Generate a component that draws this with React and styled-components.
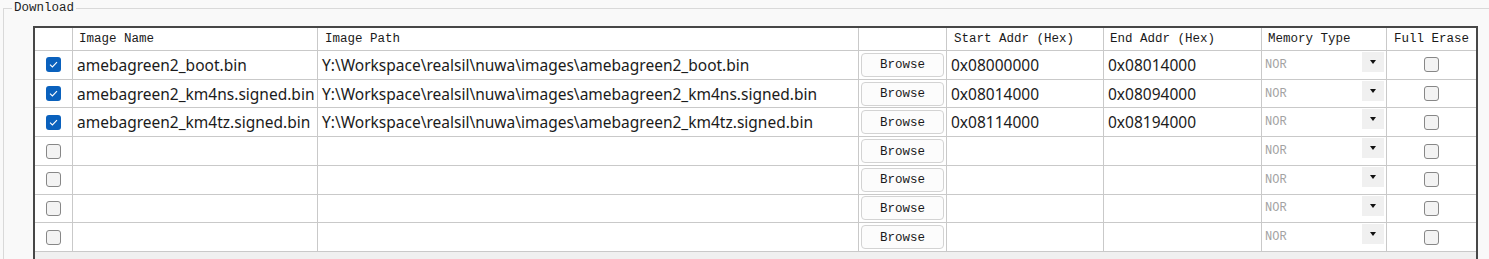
import React from "react";
import styled, { createGlobalStyle } from "styled-components";

const GlobalStyle = createGlobalStyle`
  html, body {
    margin: 0;
    padding: 0;
    background: #f9f9f9;
    overflow: hidden;
  }
  body {
    font-family: "Noto Sans", "Liberation Sans", sans-serif;
  }
`;

const mono = `"Liberation Mono", "DejaVu Sans Mono", monospace`;
const COLS = "38px 245px 541px 88px 157px 158px 125px 89px";

const Page = styled.div`
  height: 259px;
  padding-left: 3px;
  box-sizing: border-box;
`;

const GroupBox = styled.fieldset`
  margin: 0;
  padding: 0;
  min-width: 0;
  border: 0;
  border-top: 1px solid #d9d9d9;
  border-left: 1px solid #d9d9d9;
  height: 320px;
`;

const Title = styled.legend`
  margin-left: 8px;
  padding: 0 2px;
  font-family: ${mono};
  font-size: 12.5px;
  line-height: 16px;
  color: #1e1e1e;
`;

const Body = styled.div`
  padding: 10px 0 0 29px;
`;

const Table = styled.div`
  width: 1445px;
  height: 300px;
  box-sizing: border-box;
  border: 2px solid #474747;
  background: #f0f0f0;
`;

const Row = styled.div`
  display: grid;
  grid-template-columns: ${COLS};
  height: ${(p) => p.$h}px;
`;

const Cell = styled.div`
  box-sizing: border-box;
  background: #fff;
  border-right: 1px solid #c9c9c9;
  border-bottom: 1px solid #c9c9c9;
  display: flex;
  align-items: center;
  justify-content: ${(p) => (p.$center ? "center" : "flex-start")};
  padding-left: ${(p) => p.$pad || 0}px;
  overflow: hidden;
  white-space: nowrap;
  &:last-child {
    border-right: 0;
  }
`;

const HeadText = styled.span`
  font-family: ${mono};
  font-size: 12.5px;
  color: #1a1a1a;
`;

const DataText = styled.span`
  font-size: 15.5px;
  color: #1b1b1b;
`;

const Box = styled.span`
  width: 15px;
  height: 15px;
  box-sizing: border-box;
  border-radius: 3px;
  display: flex;
  align-items: center;
  justify-content: center;
  background: ${(p) => (p.$checked ? "#0a61bd" : "#f3f3f3")};
  border: ${(p) => (p.$checked ? "none" : "1px solid #878787")};
`;

const BrowseButton = styled.button`
  width: 83px;
  height: 24px;
  margin: 0 0 0 2px;
  padding: 1px 0 0;
  border: 1px solid #d3d3d3;
  border-radius: 4px;
  background: #fcfcfc;
  font-family: ${mono};
  font-size: 12.5px;
  color: #1a1a1a;
`;

const ComboText = styled.span`
  font-family: ${mono};
  font-size: 12px;
  color: #a3a3a3;
  padding-left: 3px;
`;

const ArrowBox = styled.span`
  margin-left: auto;
  margin-right: 2px;
  align-self: flex-start;
  margin-top: 1px;
  width: 22px;
  height: 20px;
  background: #f0f0f0;
  display: flex;
  align-items: center;
  justify-content: center;
  &::after {
    content: "";
    border-left: 3.5px solid transparent;
    border-right: 3.5px solid transparent;
    border-top: 4px solid #111;
  }
`;

const Check = ({ checked }) => (
  <Box $checked={checked}>
    {checked && (
      <svg width="9" height="7" viewBox="0 0 9 7">
        <path d="M1 3.6 L3.4 6 L8 1.2" fill="none" stroke="#fff" strokeWidth="1.1" />
      </svg>
    )}
  </Box>
);

const rows = [
  { name: "amebagreen2_boot.bin", start: "0x08000000", end: "0x08014000" },
  { name: "amebagreen2_km4ns.signed.bin", start: "0x08014000", end: "0x08094000" },
  { name: "amebagreen2_km4tz.signed.bin", start: "0x08114000", end: "0x08194000" },
  {},
  {},
  {},
  {},
];

const PATH = "Y:\\Workspace\\realsil\\nuwa\\images\\";

export default function App() {
  return (
    <Page>
      <GlobalStyle />
      <GroupBox>
        <Title>Download</Title>
        <Body>
          <Table>
            <Row $h={23}>
              <Cell />
              <Cell $pad={6}><HeadText>Image Name</HeadText></Cell>
              <Cell $pad={7}><HeadText>Image Path</HeadText></Cell>
              <Cell />
              <Cell $pad={7}><HeadText>Start Addr (Hex)</HeadText></Cell>
              <Cell $pad={6}><HeadText>End Addr (Hex)</HeadText></Cell>
              <Cell $pad={6}><HeadText>Memory Type</HeadText></Cell>
              <Cell $pad={7}><HeadText>Full Erase</HeadText></Cell>
            </Row>
            {rows.map((r, i) => (
              <Row key={i} $h={28.72}>
                <Cell $center><Check checked={!!r.name} /></Cell>
                <Cell $pad={4}><DataText>{r.name}</DataText></Cell>
                <Cell $pad={4}><DataText>{r.name ? PATH + r.name : ""}</DataText></Cell>
                <Cell><BrowseButton>Browse</BrowseButton></Cell>
                <Cell $pad={4}><DataText>{r.start}</DataText></Cell>
                <Cell $pad={4}><DataText>{r.end}</DataText></Cell>
                <Cell><ComboText>NOR</ComboText><ArrowBox /></Cell>
                <Cell $center><Check /></Cell>
              </Row>
            ))}
          </Table>
        </Body>
      </GroupBox>
    </Page>
  );
}
